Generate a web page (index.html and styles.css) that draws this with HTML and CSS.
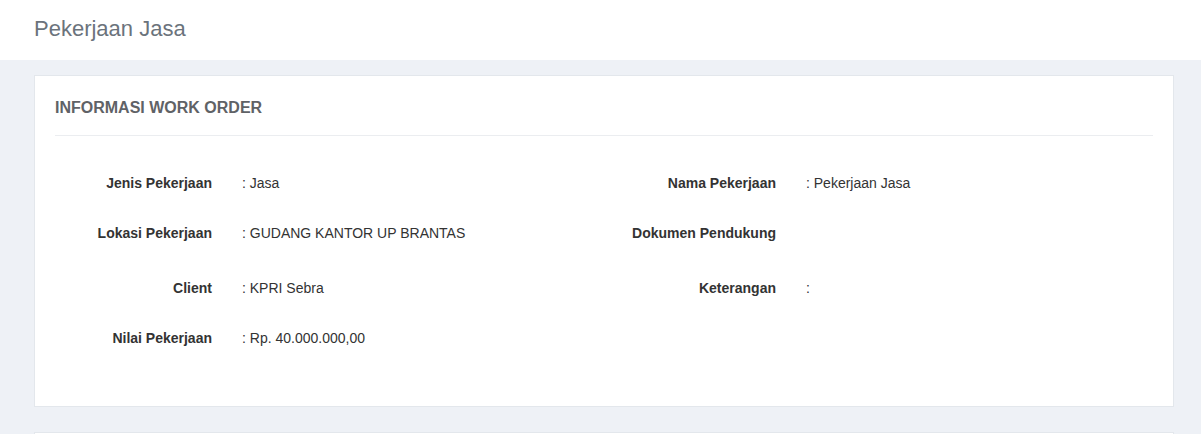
FILE: index.html
```html
<!DOCTYPE html>
<html>
<head>
<meta charset="utf-8">
<link rel="stylesheet" href="styles.css">
</head>
<body>
<header class="page-header">
  <h1 class="page-title">Pekerjaan Jasa</h1>
</header>
<main class="content">
  <section class="card">
    <div class="card-head">
      <h2 class="card-title">INFORMASI WORK ORDER</h2>
    </div>
    <div class="card-body">
      <div class="info-grid">
        <div class="field"><span class="label">Jenis Pekerjaan</span><span class="value">: Jasa</span></div>
        <div class="field"><span class="label">Nama Pekerjaan</span><span class="value">: Pekerjaan Jasa</span></div>
        <div class="field tall"><span class="label">Lokasi Pekerjaan</span><span class="value">: GUDANG KANTOR UP BRANTAS</span></div>
        <div class="field tall"><span class="label">Dokumen Pendukung</span><span class="value"></span></div>
        <div class="field"><span class="label">Client</span><span class="value">: KPRI Sebra</span></div>
        <div class="field"><span class="label">Keterangan</span><span class="value">:</span></div>
        <div class="field"><span class="label">Nilai Pekerjaan</span><span class="value">: Rp. 40.000.000,00</span></div>
      </div>
    </div>
  </section>
  <section class="card card-next"></section>
</main>
</body>
</html>
```
FILE: styles.css
```css
* { box-sizing: border-box; }
html, body { margin: 0; padding: 0; }
body {
  font-family: "Liberation Sans", Arial, sans-serif;
  background: #eef1f6;
  color: #333;
  height: 434px;
  overflow: hidden;
}
.page-header {
  background: #fff;
  height: 60px;
  display: flex;
  align-items: center;
  padding: 0 34px;
}
.page-title {
  margin: 0;
  font-size: 22px;
  font-weight: 400;
  color: #6b737c;
  padding-bottom: 2px;
}
.content {
  padding: 15px 27px 0 34px;
}
.card {
  background: #fff;
  border: 1px solid #e3e7ec;
  padding: 0 20px;
}
.card-head {
  padding: 21px 0 16px;
  border-bottom: 1px solid #ebedf0;
}
.card-title {
  margin: 0;
  font-size: 16px;
  line-height: 22px;
  font-weight: 700;
  color: #5f6266;
}
.card-body {
  padding: 37px 0 58px;
}
.info-grid {
  display: grid;
  grid-template-columns: 1fr 1fr;
  column-gap: 30px;
  row-gap: 30px;
}
.field {
  display: grid;
  grid-template-columns: 157px 1fr;
  column-gap: 30px;
  font-size: 14px;
  line-height: 20px;
}
.field.tall { min-height: 25px; }
.label {
  text-align: right;
  font-weight: 700;
  color: #333;
}
.value { color: #333; }
.card-next {
  margin-top: 25px;
  height: 8px;
}
```
